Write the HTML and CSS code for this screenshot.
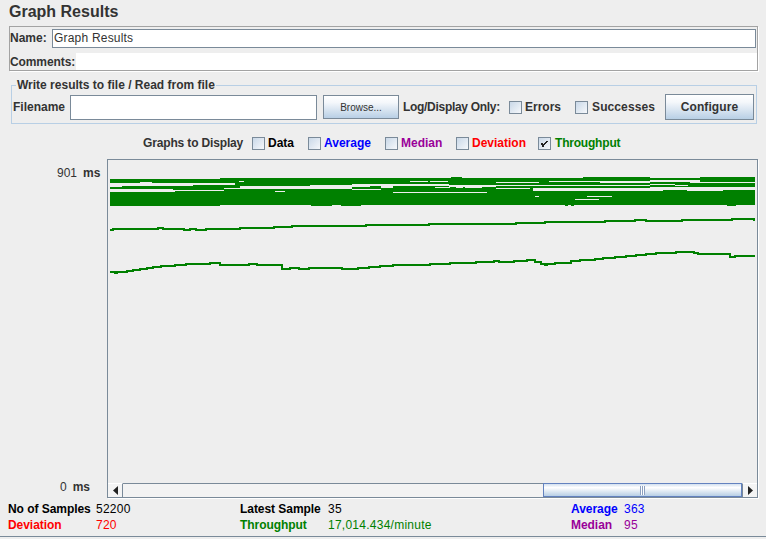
FILE: index.html
```html
<!DOCTYPE html>
<html lang="en">
<head>
    <meta charset="UTF-8">
    <meta name="viewport" content="width=device-width, initial-scale=1.0">
    <title>Graph Results</title>
    <link rel="stylesheet" href="styles.css">
</head>
<body>
    <div class="container">
        <h1>Graph Results</h1>

        <div class="name-panel">
            <div class="name-row">
                <label for="name">Name:</label>
                <input type="text" id="name" value="Graph Results">
            </div>
            <div class="comments-row">
                <label>Comments:</label>
                <div class="comments-box"></div>
            </div>
        </div>

        <div class="file-panel">
            <div class="file-title">Write results to file / Read from file</div>
            <label class="filename-label" for="filename">Filename</label>
            <input type="text" id="filename">
            <button class="browse">Browse...</button>
            <span class="log-label">Log/Display Only:</span>
            <span class="check check-errors"></span><span class="opt">Errors</span>
            <span class="check check-success"></span><span class="opt opt-success">Successes</span>
            <button class="configure">Configure</button>
        </div>

        <div class="graph-options">
            <span class="opt options-title">Graphs to Display</span>
            <span class="check"></span><span class="opt black">Data</span>
            <span class="check"></span><span class="opt blue">Average</span>
            <span class="check"></span><span class="opt purple">Median</span>
            <span class="check"></span><span class="opt red">Deviation</span>
            <span class="check">
                <svg width="11" height="11" viewBox="0 0 11 11"><path d="M2 5h2v1h1V5h1V4h1V3h2v1H8v1H7v1H6v1H5v2H3V7H2z" fill="#222"/></svg>
            </span><span class="opt green">Throughput</span>
        </div>

        <div class="chart-row">
            <div class="y-axis">
                <div class="y-top">901<b>ms</b></div>
                <div class="y-bottom">0<b>ms</b></div>
            </div>
            <div class="chart-frame">
                <svg class="plot" width="649" height="323" viewBox="108 160 649 323">
                    <g fill="#008000">
                        <!-- upper band -->
                        <rect x="110" y="179" width="110" height="4"/>
                        <rect x="220" y="178" width="15" height="5"/>
                        <rect x="235" y="178" width="4" height="7"/>
                        <rect x="239" y="178" width="71" height="8"/>
                        <rect x="310" y="178" width="42" height="7"/>
                        <rect x="352" y="178" width="78" height="6"/>
                        <rect x="430" y="178" width="19" height="6"/>
                        <rect x="449" y="178" width="134" height="7"/>
                        <rect x="451" y="177" width="11" height="1"/>
                        <rect x="583" y="177" width="67" height="8"/>
                        <rect x="650" y="178" width="50" height="9"/>
                        <rect x="700" y="177" width="55" height="10"/>
                        <!-- second band -->
                        <rect x="110" y="187" width="12" height="2"/>
                        <rect x="122" y="186" width="51" height="3"/>
                        <rect x="173" y="186" width="20" height="4"/>
                        <rect x="193" y="185" width="31" height="5"/>
                        <rect x="224" y="185" width="16" height="3"/>
                        <rect x="352" y="187" width="18" height="2"/>
                        <rect x="370" y="186" width="11" height="3"/>
                        <rect x="381" y="188" width="12" height="2"/>
                        <rect x="393" y="186" width="140" height="4"/>
                        <rect x="533" y="186" width="117" height="2"/>
                        <!-- main band -->
                        <rect x="110" y="192" width="65" height="14"/>
                        <rect x="175" y="191" width="45" height="15"/>
                        <rect x="220" y="191" width="4" height="14"/>
                        <rect x="224" y="189" width="128" height="16"/>
                        <rect x="352" y="190" width="181" height="15"/>
                        <rect x="533" y="191" width="130" height="14"/>
                        <rect x="663" y="190" width="24" height="15"/>
                        <rect x="687" y="191" width="36" height="14"/>
                        <rect x="723" y="190" width="32" height="15"/>
                        <rect x="311" y="205" width="21" height="1"/>
                        <rect x="341" y="205" width="20" height="1"/>
                        <rect x="565" y="205" width="3" height="1"/>
                        <rect x="571" y="205" width="3" height="1"/>
                        <rect x="727" y="205" width="9" height="1"/>
                    </g>
                    <g fill="#eeeeee">
                        <rect x="140" y="182" width="12" height="1"/>
                        <rect x="239" y="181" width="5" height="1"/>
                        <rect x="275" y="191" width="10" height="1"/>
                        <rect x="393" y="192" width="94" height="1"/>
                        <rect x="410" y="181" width="18" height="1"/>
                        <rect x="430" y="181" width="18" height="1"/>
                        <rect x="496" y="182" width="43" height="1"/>
                        <rect x="549" y="181" width="101" height="1"/>
                        <rect x="600" y="182" width="50" height="1"/>
                        <rect x="650" y="180" width="50" height="2"/>
                        <rect x="690" y="182" width="65" height="1"/>
                        <rect x="650" y="184" width="25" height="1"/>
                        <rect x="675" y="185" width="13" height="1"/>
                        <rect x="435" y="187" width="15" height="1"/>
                        <rect x="456" y="187" width="7" height="1"/>
                        <rect x="465" y="187" width="17" height="1"/>
                        <rect x="449" y="186" width="47" height="1"/>
                        <rect x="496" y="188" width="34" height="1"/>
                        <rect x="535" y="196" width="4" height="1"/>
                        <rect x="587" y="196" width="25" height="1"/>
                        <rect x="575" y="199" width="24" height="1"/>
                    </g>
                    <g fill="none" stroke="#008000" stroke-width="2">
                        <path d="M110 230H113V229H158V228H163V229H184V230H190V229H196V230H206V229H240V228H274V227H292V226H366V225H429V224H516V223H545V222H605V221H635V220H646V221H682V220H732V219H754V220H755"/>
                        <path d="M110 272H115V273H117V272H127V271H133V270H140V269H147V268H153V267H161V266H175V265H186V264H210V263H220V265H249V264H257V265H282V269H290V268H299V269H309V268H342V269H358V268H369V267H380V266H393V265H430V264H450V263H476V262H494V261H499V262H514V261H527V260H535V262H541V264H545V265H547V264H555V263H571V261H580V260H595V259H603V258H615V257H626V256H636V255H646V254H656V253H676V252H694V253H698V254H730V257H735V256H755"/>
                    </g>
                </svg>
                <div class="scrollbar">
                    <div class="arrow-btn">
                        <svg width="5" height="9" viewBox="0 0 5 9"><path d="M5 0v9L0 4.500z" fill="#222"/></svg>
                    </div>
                    <div class="track"></div>
                    <div class="thumb"><span class="grip"></span></div>
                    <div class="arrow-btn arrow-right">
                        <svg width="5" height="9" viewBox="0 0 5 9"><path d="M0 0v9l5-4.500z" fill="#222"/></svg>
                    </div>
                </div>
            </div>
        </div>

        <div class="stats">
            <b class="black">No of Samples</b><span class="black">52200</span>
            <b class="black">Latest Sample</b><span class="black">35</span>
            <b class="blue">Average</b><span class="blue">363</span>
            <b class="red">Deviation</b><span class="red">720</span>
            <b class="green">Throughput</b><span class="green">17,014.434/minute</span>
            <b class="purple">Median</b><span class="purple">95</span>
        </div>
    </div>
</body>
</html>
```

FILE: styles.css
```css
body {
    font-family: "Liberation Sans", Arial, sans-serif;
    font-size: 12px;
    background-color: #eeeeee;
    color: #333;
    margin: 0;
    padding: 0;
}

.container {
    height: 537px;
    box-sizing: border-box;
    border-bottom: 1px solid #7a8a99;
    overflow: hidden;
}

h1 {
    font-size: 16px;
    line-height: 18px;
    margin: 0;
    padding: 3px 0 5px 9px;
    color: #333;
}

label {
    font-weight: bold;
    color: #333;
}

input[type="text"] {
    box-sizing: border-box;
    margin: 0;
    background: #fff;
    border: 1px solid #7a8a99;
    font-family: inherit;
    font-size: 12px;
    color: #333;
}

.name-panel {
    margin-left: 9px;
    width: 749px;
    height: 45px;
    box-sizing: border-box;
    border: 1px solid #a3a3a3;
    box-shadow: 1px 1px 0 #fff;
}

.name-row {
    display: flex;
    align-items: center;
    height: 24px;
    padding: 0 1px 2px 0;
    box-sizing: border-box;
}

.name-row label {
    width: 42px;
}

.name-row input {
    flex: 1;
    height: 19px;
    padding: 0 1px;
    letter-spacing: 0.2px;
}

.comments-row {
    display: flex;
    align-items: center;
    height: 17px;
    margin-top: 2px;
}

.comments-row label {
    width: 66px;
    letter-spacing: -0.1px;
    white-space: nowrap;
}

.comments-box {
    flex: 1;
    align-self: stretch;
    background: #fff;
}

.file-panel {
    display: flex;
    align-items: center;
    position: relative;
    margin: 14px 0 0 11px;
    width: 746px;
    height: 39px;
    box-sizing: border-box;
    border: 1px solid #b8cfe5;
    padding: 5px 2px 0 1px;
}

.file-title {
    position: absolute;
    left: 4px;
    top: -9px;
    padding: 0 1px;
    background: #eeeeee;
    font-weight: bold;
    font-size: 12px;
    line-height: 16px;
}

.filename-label {
    width: 57px;
}

#filename {
    width: 247px;
    height: 25px;
}

button {
    box-sizing: border-box;
    border: 1px solid #7a8a99;
    background: linear-gradient(to bottom, #fff 0%, #f4f7fb 30%, #b8cfe5 100%);
    color: #333;
    font-family: inherit;
    padding: 0;
    cursor: pointer;
}

.browse {
    width: 76px;
    height: 24px;
    margin-left: 6px;
    font-size: 10px;
}

.log-label {
    margin-left: 4px;
    font-weight: bold;
    width: 106px;
    letter-spacing: -0.3px;
}

.configure {
    width: 89px;
    height: 26px;
    margin-left: 10px;
    font-size: 12px;
    font-weight: bold;
    letter-spacing: 0.1px;
}

.check {
    display: inline-flex;
    align-items: center;
    justify-content: center;
    width: 13px;
    height: 13px;
    box-sizing: border-box;
    border: 1px solid #7a8a99;
    background: linear-gradient(135deg, #c9d8e8, #f6f8fb);
    flex: none;
}

.opt {
    font-weight: bold;
    margin-left: 3px;
}

.check-success {
    margin-left: 14px;
}

.opt-success {
    margin-left: 4px;
    letter-spacing: 0.1px;
}

.black { color: #000; }
.blue { color: #0000ff; }
.purple { color: #990099; }
.red { color: #ff0000; }
.green { color: #008000; }

.graph-options {
    display: flex;
    align-items: center;
    height: 16px;
    margin-top: 11px;
    padding-left: 143px;
}

.graph-options .opt {
    width: 40px;
    white-space: nowrap;
}

.graph-options .options-title {
    width: 100px;
    margin: 0 9px 0 0;
    letter-spacing: -0.15px;
}

.graph-options .blue { width: 61px; }
.graph-options .purple { width: 55px; }
.graph-options .red { width: 66px; }
.graph-options .green { margin-left: 4px; letter-spacing: -0.2px; }

.chart-row {
    display: flex;
    height: 339px;
    margin-top: 8px;
}

.y-axis {
    width: 107px;
    flex: none;
    position: relative;
}

.y-axis b {
    margin-left: 6px;
}

.y-top {
    position: absolute;
    left: 57px;
    top: 7px;
}

.y-bottom {
    position: absolute;
    left: 60px;
    top: 321px;
}

.chart-frame {
    width: 651px;
    box-sizing: border-box;
    border-top: 1px solid #7a8a99;
    border-left: 1px solid #7a8a99;
    border-right: 1px solid #7a8a99;
    box-shadow: 1px 1px 0 #fff;
}

.plot {
    display: block;
    overflow: hidden;
}

.scrollbar {
    display: flex;
    height: 14px;
    border-bottom: 1px solid #7a8a99;
    background: #f2f2f2;
}

.arrow-btn {
    width: 15px;
    box-sizing: border-box;
    display: flex;
    align-items: center;
    justify-content: center;
    background: #f4f4f4;
    border-right: 1px solid #7a8a99;
    border-top: 1px solid #fff;
}

.arrow-right {
    border-right: none;
    border-left: 1px solid #7a8a99;
}

.track {
    flex: 1;
    border-top: 1px solid #7a8a99;
    background: #f3f3f3;
}

.thumb {
    width: 199px;
    box-sizing: border-box;
    border: 1px solid #6382bf;
    background: linear-gradient(to bottom, #d3e0f0 0%, #fff 30%, #b8cfe5 100%);
    display: flex;
    align-items: center;
    justify-content: center;
}

.grip {
    width: 5px;
    height: 9px;
    background: repeating-linear-gradient(to right, #8ca0c0 0, #8ca0c0 1px, #fff 1px, #fff 2px);
}

.stats {
    display: grid;
    grid-template-columns: 88px 144px 88px 243px 53px auto;
    grid-auto-rows: 16px;
    align-items: center;
    padding: 3px 0 0 8px;
}

.stats b {
    white-space: nowrap;
    letter-spacing: -0.05px;
}

.stats span {
    letter-spacing: 0.25px;
}
```
